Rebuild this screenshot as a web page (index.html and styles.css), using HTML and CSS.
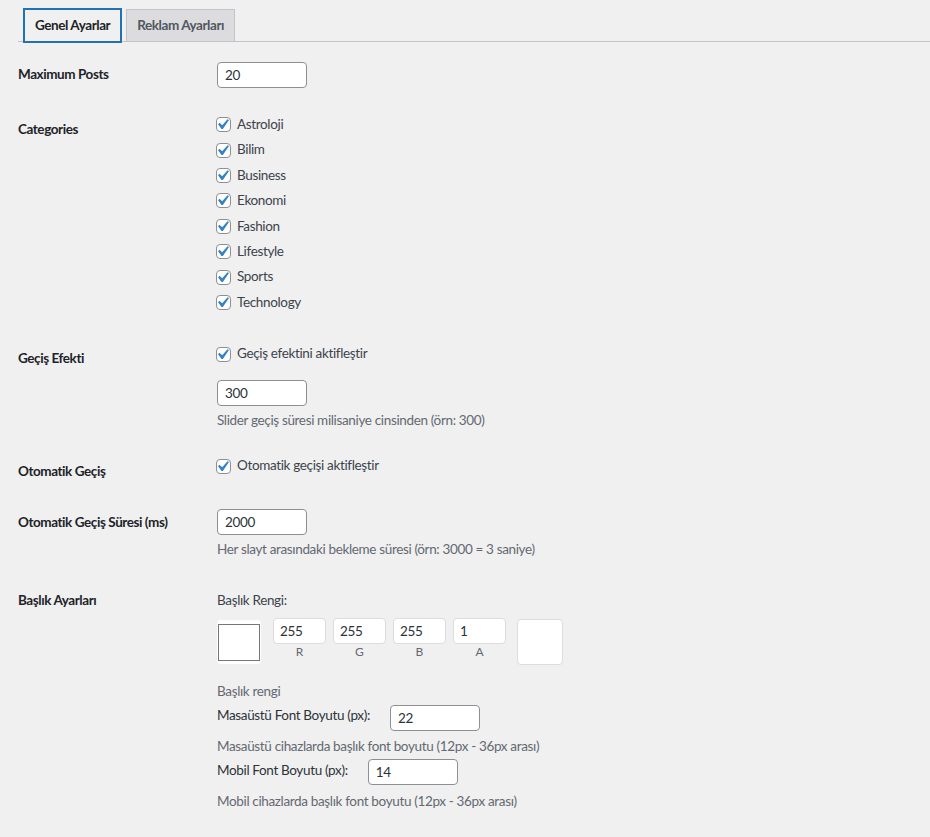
FILE: index.html
```html
<!DOCTYPE html>
<html lang="tr">
<head>
<meta charset="utf-8">
<title>Ayarlar</title>
<link rel="stylesheet" href="styles.css">
</head>
<body>
<div class="wrap">
  <nav class="tabs">
    <a class="tab tab--active">Genel Ayarlar</a>
    <a class="tab">Reklam Ayarları</a>
  </nav>

  <div class="form">
    <div class="row row--posts">
      <div class="label">Maximum Posts</div>
      <div class="field"><input class="text" type="text" value="20"></div>
    </div>

    <div class="row row--cats">
      <div class="label">Categories</div>
      <div class="field">
        <ul class="checklist">
          <li><label class="check"><span class="cb"><svg viewBox="0 0 20 20"><path d="M14.83 4.89l1.34.94-5.81 8.38H9.02L5.78 9.67l1.34-1.25 2.57 2.4z"/></svg></span>Astroloji</label></li>
          <li><label class="check"><span class="cb"><svg viewBox="0 0 20 20"><path d="M14.83 4.89l1.34.94-5.81 8.38H9.02L5.78 9.67l1.34-1.25 2.57 2.4z"/></svg></span>Bilim</label></li>
          <li><label class="check"><span class="cb"><svg viewBox="0 0 20 20"><path d="M14.83 4.89l1.34.94-5.81 8.38H9.02L5.78 9.67l1.34-1.25 2.57 2.4z"/></svg></span>Business</label></li>
          <li><label class="check"><span class="cb"><svg viewBox="0 0 20 20"><path d="M14.83 4.89l1.34.94-5.81 8.38H9.02L5.78 9.67l1.34-1.25 2.57 2.4z"/></svg></span>Ekonomi</label></li>
          <li><label class="check"><span class="cb"><svg viewBox="0 0 20 20"><path d="M14.83 4.89l1.34.94-5.81 8.38H9.02L5.78 9.67l1.34-1.25 2.57 2.4z"/></svg></span>Fashion</label></li>
          <li><label class="check"><span class="cb"><svg viewBox="0 0 20 20"><path d="M14.83 4.89l1.34.94-5.81 8.38H9.02L5.78 9.67l1.34-1.25 2.57 2.4z"/></svg></span>Lifestyle</label></li>
          <li><label class="check"><span class="cb"><svg viewBox="0 0 20 20"><path d="M14.83 4.89l1.34.94-5.81 8.38H9.02L5.78 9.67l1.34-1.25 2.57 2.4z"/></svg></span>Sports</label></li>
          <li><label class="check"><span class="cb"><svg viewBox="0 0 20 20"><path d="M14.83 4.89l1.34.94-5.81 8.38H9.02L5.78 9.67l1.34-1.25 2.57 2.4z"/></svg></span>Technology</label></li>
        </ul>
      </div>
    </div>

    <div class="row row--fx">
      <div class="label">Geçiş Efekti</div>
      <div class="field">
        <label class="check"><span class="cb"><svg viewBox="0 0 20 20"><path d="M14.83 4.89l1.34.94-5.81 8.38H9.02L5.78 9.67l1.34-1.25 2.57 2.4z"/></svg></span>Geçiş efektini aktifleştir</label>
        <input class="text text--spaced" type="text" value="300">
        <p class="description">Slider geçiş süresi milisaniye cinsinden (örn: 300)</p>
      </div>
    </div>

    <div class="row row--auto">
      <div class="label">Otomatik Geçiş</div>
      <div class="field">
        <label class="check"><span class="cb"><svg viewBox="0 0 20 20"><path d="M14.83 4.89l1.34.94-5.81 8.38H9.02L5.78 9.67l1.34-1.25 2.57 2.4z"/></svg></span>Otomatik geçişi aktifleştir</label>
      </div>
    </div>

    <div class="row row--delay">
      <div class="label">Otomatik Geçiş Süresi (ms)</div>
      <div class="field">
        <input class="text" type="text" value="2000">
        <p class="description">Her slayt arasındaki bekleme süresi (örn: 3000 = 3 saniye)</p>
      </div>
    </div>

    <div class="row row--title">
      <div class="label">Başlık Ayarları</div>
      <div class="field">
        <p class="sub">Başlık Rengi:</p>
        <div class="rgba">
          <div class="swatch"><div class="swatch-inner"></div></div>
          <div class="channels">
            <div class="channel"><input class="chan" type="text" value="255"><span class="chan-label">R</span></div>
            <div class="channel"><input class="chan" type="text" value="255"><span class="chan-label">G</span></div>
            <div class="channel"><input class="chan" type="text" value="255"><span class="chan-label">B</span></div>
            <div class="channel"><input class="chan" type="text" value="1"><span class="chan-label">A</span></div>
          </div>
          <div class="preview"></div>
        </div>
        <p class="description description--color">Başlık rengi</p>
        <div class="inline-field inline-field--desktop">
          <label class="inline-label">Masaüstü Font Boyutu (px):</label>
          <input class="text" type="text" value="22">
        </div>
        <p class="description description--tight">Masaüstü cihazlarda başlık font boyutu (12px - 36px arası)</p>
        <div class="inline-field inline-field--mobile">
          <label class="inline-label">Mobil Font Boyutu (px):</label>
          <input class="text" type="text" value="14">
        </div>
        <p class="description description--last">Mobil cihazlarda başlık font boyutu (12px - 36px arası)</p>
      </div>
    </div>
  </div>
</div>
</body>
</html>
```

FILE: styles.css
```css
* { box-sizing: border-box; }

html, body {
  margin: 0;
  padding: 0;
  background: #f0f0f1;
}

body {
  font-family: Lato, "Open Sans", "Noto Sans", sans-serif;
  font-size: 13.5px;
  letter-spacing: -0.35px;
  color: #3c434a;
  height: 837px;
  overflow: hidden;
}

.wrap {
  padding-left: 18px;
}

/* Tabs */
.tabs {
  display: flex;
  align-items: flex-start;
  gap: 5px;
  padding: 9px 0 0 6px;
  border-bottom: 1px solid #c3c4c7;
}

.tab {
  display: block;
  height: 32px;
  padding: 0 10px;
  line-height: 31px;
  font-size: 13.5px;
  font-weight: 700;
  letter-spacing: -0.43px;
  color: #50575e;
  background: #dcdcde;
  border: 1px solid #c3c4c7;
  border-bottom: none;
  text-decoration: none;
  white-space: nowrap;
}

.tab--active {
  height: 33px;
  margin-bottom: -1px;
  color: #1d2327;
  background: #f0f0f1;
  border: 1px solid #2271b1;
  box-shadow: 0 0 0 1px #2271b1;
}

/* Form rows */
.row {
  display: grid;
  grid-template-columns: 199px 1fr;
  align-items: start;
}

.label {
  font-weight: 700;
  letter-spacing: -0.43px;
  color: #1d2327;
  line-height: 18.2px;
}

.field {
  line-height: 19.6px;
}

.row--posts { padding-top: 20px; }
.row--posts .label { margin-top: 3px; }

.row--cats { padding-top: 27px; }
.row--cats .label { margin-top: 5px; }

.row--fx { padding-top: 32px; }
.row--fx .label { margin-top: 5px; }

.row--auto { padding-top: 26px; }
.row--auto .label { margin-top: 6px; }

.row--delay { padding-top: 28px; }
.row--delay .label { margin-top: 4px; }

.row--title { padding-top: 32px; }
.row--title .label { margin-top: 0; }

/* Inputs */
.text {
  display: block;
  width: 90px;
  height: 26px;
  margin: 0;
  padding: 0 7px;
  font-family: inherit;
  font-size: 13.5px;
  letter-spacing: inherit;
  color: #2c3338;
  background: #fff;
  border: 1px solid #8c8f94;
  border-radius: 4px;
  outline: none;
}

.text--spaced { margin-top: 16px; }

.description {
  margin: 5px 0 0;
  color: #646970;
  line-height: 19.6px;
}

/* Checkboxes */
.checklist {
  list-style: none;
  margin: 0;
  padding: 0;
}

.checklist li {
  margin: 0 0 6px;
  line-height: 19.4px;
}

.checklist li:last-child { margin-bottom: 0; }

.check {
  display: flex;
  align-items: center;
  color: #3c434a;
}

.cb {
  position: relative;
  flex: none;
  width: 15px;
  height: 15px;
  margin: 0 6px 0 -1px;
  background: #fff;
  border: 1px solid #8c8f94;
  border-radius: 4px;
}

.cb svg {
  position: absolute;
  left: -5px;
  top: -4px;
  width: 21px;
  height: 21px;
  fill: #3582c4;
}

/* Title colour block */
.sub {
  margin: 0;
  color: #3c434a;
}

.rgba {
  display: flex;
  align-items: flex-start;
  margin-top: 7px;
}

.swatch {
  width: 44px;
  height: 44px;
  margin-top: 2px;
  padding: 4px 1px 3px;
  background: #fff;
  border-radius: 4px;
}

.swatch-inner {
  height: 100%;
  background: #fff;
  border: 1px solid #767676;
}

.channels {
  display: flex;
  gap: 7px;
  margin-left: 12px;
}

.channel {
  display: flex;
  flex-direction: column;
  align-items: center;
}

.chan {
  width: 53px;
  height: 26px;
  margin: 0;
  padding: 0 6px;
  font-family: inherit;
  font-size: 13.5px;
  letter-spacing: inherit;
  color: #2c3338;
  background: #fff;
  border: 1px solid #dcdcde;
  border-radius: 4px;
  outline: none;
}

.chan-label {
  font-size: 12px;
  line-height: 16px;
  letter-spacing: 0;
  color: #646970;
}

.preview {
  width: 46px;
  height: 46px;
  margin: 1px 0 0 11px;
  background: #fff;
  border: 1px solid #dcdcde;
  border-radius: 4px;
}

.description--color { margin-top: 17px; }

.inline-field {
  display: flex;
  align-items: flex-start;
}

.inline-field--desktop { margin-top: 4px; }
.inline-field--desktop .inline-label { margin-top: 1px; }
.inline-field--mobile { margin-top: 2px; }
.inline-field--mobile .inline-label { margin-top: 2px; }

.inline-label {
  margin-right: 20px;
  color: #2c3338;
  line-height: 19.6px;
}

.description--tight { margin-top: 6px; }
.description--last { margin-top: 7px; }
```
